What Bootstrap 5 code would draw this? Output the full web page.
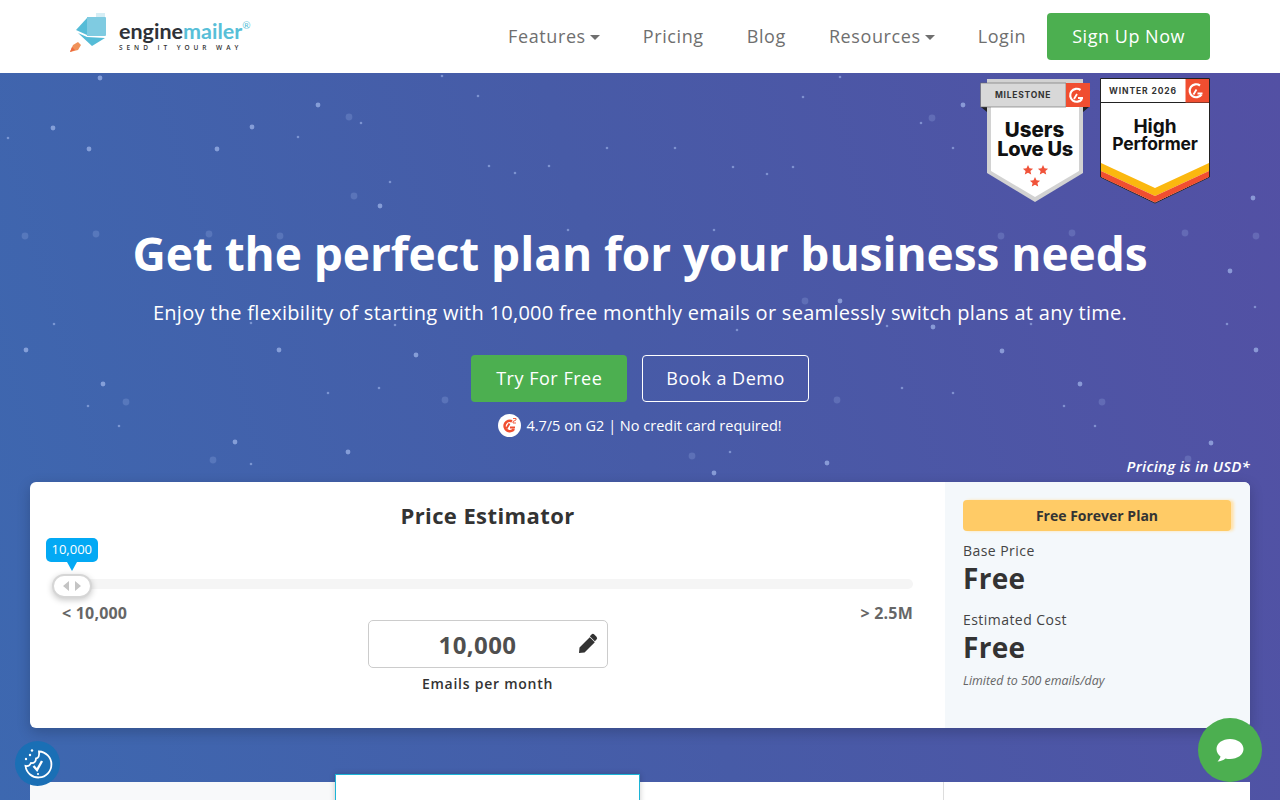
<!DOCTYPE html>
<html lang="en">
<head>
    <meta charset="UTF-8">
    <meta name="viewport" content="width=device-width, initial-scale=1.0">
    <title>Pricing - Enginemailer</title>
    <link href="https://cdn.jsdelivr.net/npm/bootstrap@5.3.2/dist/css/bootstrap.min.css" rel="stylesheet">
    <style>
        body {
            font-family: "Open Sans", sans-serif;
            height: 800px;
            overflow: hidden;
            color: #333;
        }

        .em-nav {
            height: 73px;
            padding: 0 70px;
            background: #fff;
            position: relative;
            z-index: 2;
        }

        .em-brand { gap: 11px; padding-bottom: 7px; }
        .em-brand-name {
            font-family: "Lato", sans-serif;
            font-weight: 700;
            font-size: 21.5px;
            line-height: 22px;
            color: #2f3238;
            margin-top: 5px;
        }
        .em-brand-name span { color: #58bfd8; }
        .em-brand-name sup { color: #58bfd8; font-size: 10px; top: -10px; font-weight: 400; }
        .em-brand-tag {
            font-size: 6.5px;
            line-height: 9px;
            font-weight: 600;
            letter-spacing: 3.95px;
            color: #333;
            white-space: nowrap;
            margin-top: 1px;
        }

        .em-link {
            color: #6f6f6f;
            font-size: 18px;
            letter-spacing: .6px;
            padding: 0;
            margin-right: 43px;
            text-decoration: none;
        }
        .em-link-last { margin-right: 21px; }
        .em-link.dropdown-toggle::after { margin-left: 4px; vertical-align: 3px; }

        .em-btn {
            font-size: 18px;
            letter-spacing: .52px;
            line-height: 25px;
            padding: 10px 24px;
            border-radius: 4px;
            color: #fff;
            border: 1px solid transparent;
        }
        .em-btn-green { background: #4caf50; }
        .em-btn-line { border-color: #fff; padding: 10px 23px; }

        .em-hero {
            position: relative;
            height: 727px;
            background: linear-gradient(75deg, #3d68b0 0%, #475ba7 50%, #5350a4 100%);
            overflow: hidden;
        }
        .em-stars { position: absolute; inset: 0; filter: blur(.5px); }
        .em-hero-in { position: relative; }

        .em-badges { padding: 5px 70px 0 0; gap: 10px; height: 131px; }

        .em-title {
            font-size: 46px;
            line-height: 62px;
            font-weight: 700;
            letter-spacing: -.05px;
            color: #fff;
            margin: 18px 0 0;
        }
        .em-sub {
            font-size: 20px;
            line-height: 27px;
            letter-spacing: .29px;
            color: #fff;
            margin: 15px 0 0;
        }
        .em-cta { gap: 15px; margin-top: 29px; }
        .em-note {
            font-size: 14.5px;
            line-height: 22px;
            color: #fff;
            margin-top: 12px;
            gap: 5px;
        }
        .em-usd {
            font-size: 15px;
            line-height: 20px;
            font-weight: 600;
            font-style: italic;
            letter-spacing: .25px;
            color: #fff;
            text-align: right;
            padding-right: 30px;
            margin-top: 19px;
        }

        .em-panel {
            margin: 6px 30px 0;
            height: 246px;
            background: #fff;
            border-radius: 6px;
            overflow: hidden;
            box-shadow: 0 4px 14px rgba(0, 0, 0, .2);
        }
        .em-est { width: 915px; position: relative; text-align: center; }
        .em-est-title {
            font-size: 22px;
            line-height: 30px;
            font-weight: 700;
            letter-spacing: .4px;
            color: #333;
            padding-top: 18px;
        }
        .em-tip {
            position: absolute;
            left: 16px;
            top: 56px;
            padding: 0 5.5px;
            height: 24px;
            line-height: 23px;
            font-size: 13px;
            color: #fff;
            background: #03a9f4;
            border-radius: 5px;
        }
        .em-tip::after {
            content: "";
            position: absolute;
            left: 21px;
            top: 24px;
            border: 5px solid transparent;
            border-top: 9px solid #03a9f4;
            border-bottom: 0;
        }
        .em-track {
            position: absolute;
            left: 32px;
            top: 97px;
            width: 851px;
            height: 10px;
            background: #f5f5f5;
            border-radius: 5px;
        }
        .em-thumb {
            position: absolute;
            left: 22px;
            top: 92px;
            width: 40px;
            height: 24px;
            background: #fff;
            border: 2px solid #d6d6d6;
            border-radius: 12px;
            box-shadow: 0 2px 6px rgba(0, 0, 0, .22);
        }
        .em-range {
            padding: 72px 32px 0;
            font-size: 16px;
            line-height: 22px;
            font-weight: 700;
            letter-spacing: .2px;
            color: #666;
        }
        .em-count {
            width: 240px;
            height: 48px;
            margin: -4px auto 0;
            border: 1px solid #ccc;
            border-radius: 5px;
            position: relative;
            font-size: 24px;
            line-height: 47px;
            font-weight: 700;
            letter-spacing: .4px;
            color: #4f4f4f;
            padding-right: 20px;
        }
        .em-pencil { position: absolute; right: 9px; top: 12px; }
        .em-count-lbl {
            font-size: 14px;
            line-height: 20px;
            font-weight: 600;
            letter-spacing: .75px;
            color: #333;
            margin-top: 6px;
        }

        .em-side { width: 305px; background: #f4f8fb; padding: 18px 0 0 18px; }
        .em-plan {
            height: 31px;
            line-height: 31px;
            font-size: 14px;
            font-weight: 700;
            color: #333;
            text-align: center;
            background: #ffcb66;
            border-radius: 4px;
            width: 268px;
            box-shadow: 3px 0 3px #ffe3ad;
        }
        .em-lbl { font-size: 14px; line-height: 20px; letter-spacing: .45px; color: #444; margin-top: 10px; }
        .em-lbl-next { margin-top: 14px; }
        .em-val { font-size: 28px; line-height: 35px; font-weight: 700; color: #333; letter-spacing: .3px; }
        .em-limit { font-size: 12.4px; line-height: 18px; font-style: italic; color: #666; margin-top: 7px; }

        .em-table {
            margin: 54px 30px 0;
            height: 40px;
            position: relative;
            background: #fff;
        }
        .em-tcol { width: 305px; height: 40px; }
        .em-tcol-a { background: #f8f9fa; }
        .em-tcol-b {
            position: relative;
            top: -8px;
            height: 60px;
            background: #fff;
            border: 1px solid #1cb4d6;
            box-shadow: 0 0 6px rgba(0, 0, 0, .2);
        }
        .em-tcol-c { width: 303px; }
        .em-tcol-d { border-left: 1px solid #ddd; }

        .em-cookie {
            position: fixed;
            left: 15px;
            top: 741px;
            width: 45px;
            height: 45px;
            border-radius: 50%;
            background: #1a6fb5;
            z-index: 5;
        }
        .em-chat {
            position: fixed;
            left: 1198px;
            top: 718px;
            width: 64px;
            height: 64px;
            border-radius: 50%;
            background: #4caf50;
            z-index: 5;
        }
    </style>
</head>
<body>
    <!-- top nav -->
    <nav class="em-nav d-flex align-items-center justify-content-between">
        <a class="em-brand d-flex align-items-center text-decoration-none" href="#">
            <svg width="38" height="42" viewBox="0 0 38 42" class="flex-shrink-0">
                <path d="M26 1h9v8h-9z" fill="#d6eef5"/>
                <path d="M17 5h18a1 1 0 0 1 1 1v17a1 1 0 0 1-1 1H17z" fill="#7fcbe1"/>
                <path d="M6 18 17 6v17z" fill="#55bcd7"/>
                <path d="M8 21l9 4 18 1-13 8z" fill="#55bcd7"/>
                <path d="M0 40l3-7 5-3 3 3-3 5z" fill="#f0925a"/>
                <path d="M0 40l2-5 3 3z" fill="#ee6a3e"/>
            </svg>
            <span class="d-block">
                <span class="em-brand-name d-block">engine<span>mailer</span><sup>®</sup></span>
                <span class="em-brand-tag d-block">SEND IT YOUR WAY</span>
            </span>
        </a>
        <div class="d-flex align-items-center">
            <a class="em-link dropdown-toggle" href="#">Features</a>
            <a class="em-link" href="#">Pricing</a>
            <a class="em-link" href="#">Blog</a>
            <a class="em-link dropdown-toggle" href="#">Resources</a>
            <a class="em-link em-link-last" href="#">Login</a>
            <a class="btn em-btn em-btn-green" href="#">Sign Up Now</a>
        </div>
    </nav>

    <section class="em-hero">
        <svg class="em-stars" id="stars" width="1280" height="727"></svg>
        <div class="em-hero-in">
            <div class="em-badges d-flex justify-content-end">
                <svg width="110" height="126" viewBox="0 0 110 126">
                    <path d="M7 1h96v94l-48 29-48-29z" fill="#d2d2d2"/>
                    <path d="M11 20h88v73l-44 26-44-26z" fill="#fff"/>
                    <path d="M1 29h6v5zM109 29h-6v5z" fill="#222"/>
                    <path d="M.5 5h85.500v24H.5z" fill="#d8d8d8" stroke="#666" stroke-width=".6"/>
                    <path d="M86 5h24v24H86z" fill="#f04e30"/>
                    <text x="43" y="20" text-anchor="middle" font-family="Inter, sans-serif" font-size="8.500" font-weight="700" letter-spacing=".75" fill="#333">MILESTONE</text>
                    <path d="M100.500 12a6.500 6.500 0 1 0 1.500 9" fill="none" stroke="#fff" stroke-width="2.200"/>
                    <path d="M94 21l3-5M98 20h5" stroke="#fff" stroke-width="1.800" fill="none"/>
                    <text x="54.500" y="59" text-anchor="middle" font-family="Inter, sans-serif" font-size="20.500" font-weight="800" fill="#111">Users</text>
                    <text x="55" y="78" text-anchor="middle" font-family="Inter, sans-serif" font-size="20" font-weight="800" letter-spacing="-.3" fill="#111">Love Us</text>
                    <g fill="#f0533a">
                        <path d="M48 87l1.500 3.300 3.600.4-2.700 2.400.8 3.500-3.200-1.800-3.200 1.800.8-3.500-2.700-2.400 3.600-.4z"/>
                        <path d="M63 87l1.500 3.300 3.600.4-2.700 2.400.8 3.500-3.200-1.800-3.200 1.800.8-3.500-2.700-2.400 3.600-.4z"/>
                        <path d="M55 99l1.500 3.300 3.600.4-2.700 2.400.8 3.500-3.200-1.800-3.200 1.800.8-3.500-2.700-2.400 3.600-.4z"/>
                    </g>
                </svg>
                <svg width="110" height="126" viewBox="0 0 110 126">
                    <path d="M.5.5h109v98.500L55 125 .5 99z" fill="#fff" stroke="#222"/>
                    <path d="M1 85l54 25 54-25v8l-54 25-54-25z" fill="#fbb80f"/>
                    <path d="M1 93l54 25 54-25v6l-54 25.500L1 99z" fill="#f04e30"/>
                    <path d="M.5 24.500h109" stroke="#222"/>
                    <path d="M85.500 1H109v23.500H85.500z" fill="#f04e30"/>
                    <text x="43" y="16" text-anchor="middle" font-family="Inter, sans-serif" font-size="8.500" font-weight="700" letter-spacing=".9" fill="#333">WINTER 2026</text>
                    <path d="M100 7.500a6.500 6.500 0 1 0 1.500 9" fill="none" stroke="#fff" stroke-width="2.200"/>
                    <path d="M93.500 16.500l3-5M97.500 15.500h5" stroke="#fff" stroke-width="1.800" fill="none"/>
                    <text x="55" y="55" text-anchor="middle" font-family="Inter, sans-serif" font-size="19" font-weight="700" fill="#111">High</text>
                    <text x="55" y="72" text-anchor="middle" font-family="Inter, sans-serif" font-size="17.500" font-weight="700" letter-spacing="-.2" fill="#111">Performer</text>
                </svg>
            </div>

            <h1 class="em-title text-center">Get the perfect plan for your business needs</h1>
            <p class="em-sub text-center">Enjoy the flexibility of starting with 10,000 free monthly emails or seamlessly switch plans at any time.</p>

            <div class="em-cta d-flex justify-content-center">
                <a class="btn em-btn em-btn-green" href="#">Try For Free</a>
                <a class="btn em-btn em-btn-line" href="#">Book a Demo</a>
            </div>

            <div class="em-note d-flex justify-content-center align-items-center">
                <svg width="23" height="23" viewBox="0 0 23 23">
                    <circle cx="11.5" cy="11.5" r="11.5" fill="#fff"/>
                    <path d="M14 7.200a5.200 5.200 0 1 0 2 7.800" fill="none" stroke="#f04e30" stroke-width="2.600"/>
                    <path d="M8.500 14.500l3-5M12 13.500h5" stroke="#f04e30" stroke-width="2" fill="none"/>
                    <path d="M15 4.500h3v1.500l-3 1.500v1.500h3" stroke="#f04e30" stroke-width=".9" fill="none"/>
                </svg>
                <span>4.7/5 on G2 | No credit card required!</span>
            </div>

            <div class="em-usd">Pricing is in USD*</div>

            <div class="em-panel d-flex">
                <div class="em-est">
                    <div class="em-est-title">Price Estimator</div>
                    <div class="em-tip">10,000</div>
                    <div class="em-track"></div>
                    <div class="em-thumb d-flex align-items-center justify-content-center">
                        <svg width="20" height="10" viewBox="0 0 20 10" fill="#c4c4c4">
                            <path d="M1 5l6-5v10zM19 5l-6-5v10z"/>
                        </svg>
                    </div>
                    <div class="em-range d-flex justify-content-between">
                        <span>&lt; 10,000</span>
                        <span>&gt; 2.5M</span>
                    </div>
                    <div class="em-count">
                        10,000
                        <svg class="em-pencil" width="20" height="20" viewBox="0 0 20 20" fill="#333">
                            <path d="M13.500 1.500a2 2 0 0 1 2.800 0l2.200 2.200a2 2 0 0 1 0 2.800l-1.700 1.700-5-5zM11.800 4.200l5 5L6.500 19.500 1 20l.5-5.500z"/>
                        </svg>
                    </div>
                    <div class="em-count-lbl">Emails per month</div>
                </div>
                <div class="em-side">
                    <div class="em-plan">Free Forever Plan</div>
                    <div class="em-lbl">Base Price</div>
                    <div class="em-val">Free</div>
                    <div class="em-lbl em-lbl-next">Estimated Cost</div>
                    <div class="em-val">Free</div>
                    <div class="em-limit">Limited to 500 emails/day</div>
                </div>
            </div>

            <div class="em-table d-flex">
                <div class="em-tcol em-tcol-a"></div>
                <div class="em-tcol em-tcol-b"></div>
                <div class="em-tcol em-tcol-c"></div>
                <div class="em-tcol em-tcol-d"></div>
            </div>
        </div>
    </section>

    <div class="em-cookie d-flex align-items-center justify-content-center">
        <svg width="32" height="32" viewBox="0 0 32 32" fill="none" stroke="#fff" stroke-width="1.800">
            <path d="M17 3.500A13 13 0 1 1 3.500 18c2.500.5 4.500-.5 5.500-3 3 .5 5-1.500 5-4.500 2.500-.5 3.500-3.500 3-7z"/>
            <path d="M11.500 18l3.500 4 5-9" stroke-width="2.400"/>
            <circle cx="16" cy="26" r="1.100" fill="#fff" stroke="none"/>
            <circle cx="4" cy="11" r="1.200" fill="#fff" stroke="none"/>
            <circle cx="8" cy="7" r="1.200" fill="#fff" stroke="none"/>
            <circle cx="10" cy="2.500" r="1.200" fill="#fff" stroke="none"/>
        </svg>
    </div>
    <div class="em-chat d-flex align-items-center justify-content-center">
        <svg width="28" height="24" viewBox="0 0 28 24" fill="#fff">
            <path d="M14 1c7.500 0 13.500 4.300 13.500 10S21.500 21 14 21c-1.600 0-3.100-.2-4.500-.6C7.500 22 4.500 23.300 1.500 23.500c1.300-1.300 2.500-3 3-5C2.200 16.700.5 14 .5 11 .5 5.300 6.500 1 14 1z"/>
        </svg>
    </div>

    <script src="https://cdn.jsdelivr.net/npm/bootstrap@5.3.2/dist/js/bootstrap.bundle.min.js"></script>
    <script>
        // Star field: [radius, opacity, list of x,y]
        const starSets = [
            [2.4, .65, [53,55, 252,54, 217,76, 89,76, 318,32, 100,5, 380,133, 26,277, 279,277, 416,282, 103,311, 235,369, 348,379, 963,32, 933,254, 840,228, 827,390, 714,400, 1002,278, 1256,277, 1080,311, 1211,370, 1253,125, 1230,198]],
            [3.4, .22, [349,44, 354,123, 25,163, 96,161, 209,161, 280,163, 126,329, 445,327, 213,387, 932,45, 805,228, 837,327, 692,383, 1001,163, 1072,160, 1185,160, 1256,163, 1102,329, 1188,386]],
            [1.3, .55, [361,50, 298,64, 8,65, 390,109, 54,251, 88,333, 328,320, 379,315, 119,353, 251,391, 395,252, 251,250, 478,23, 442,3, 921,50, 803,24, 840,4, 607,75, 675,75, 549,93, 515,100, 489,93, 733,94, 767,101, 793,94, 953,75, 568,157, 714,157, 887,253, 737,257, 902,315, 953,320, 730,379, 1255,234, 1227,251, 1031,251, 1064,333, 1095,353]]
        ];
        let starsHtml = '';
        starSets.forEach(([r, op, pts]) => {
            for (let i = 0; i < pts.length; i += 2) {
                starsHtml += `<circle cx="${pts[i]}" cy="${pts[i + 1]}" r="${r}" fill="#a9bff0" fill-opacity="${op}"/>`;
            }
        });
        document.getElementById('stars').innerHTML = starsHtml;
    </script>
</body>
</html>
